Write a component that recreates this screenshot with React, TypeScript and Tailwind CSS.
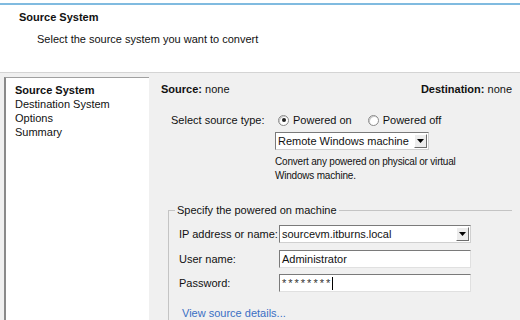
import React from "react";

function Radio({ checked }: { checked?: boolean }) {
  return (
    <span className="inline-flex w-[11px] h-[11px] rounded-full border border-[#8a8a8a] bg-white items-center justify-center shadow-[inset_1px_1px_0_#c8c8c8]">
      {checked ? <span className="w-[4px] h-[4px] rounded-full bg-[#222]" /> : null}
    </span>
  );
}

function DropBtn() {
  return (
    <span className="flex w-[13px] h-[14px] items-center justify-center bg-[#ececec] border border-t-white border-l-white border-b-[#6d6d6d] border-r-[#6d6d6d]">
      <svg width="7" height="4" viewBox="0 0 7 4"><path d="M0 0H7L3.5 4Z" fill="#000" /></svg>
    </span>
  );
}

export default function App() {
  return (
    <div
      className="w-[520px] h-[320px] overflow-hidden bg-[#f0f0f0] text-[11px] text-[#111] flex flex-col"
      style={{ fontFamily: "'Liberation Sans', Arial, sans-serif" }}
    >
      <div className="bg-white h-[73px] shrink-0 border-b border-[#d4d4d4] flex flex-col">
        <div className="h-[3px]" />
        <div className="h-[2px] bg-[#80bbe0]" />
        <div className="pl-[19px] pt-[5px] font-bold leading-[14px]">Source System</div>
        <div className="pl-[37px] pt-[8px] leading-[14px]">Select the source system you want to convert</div>
      </div>
      <div className="flex flex-1 pt-[4px] pl-[4px]">
        <div className="w-[145px] bg-white border-l-2 border-t border-l-[#8a8a8a] border-t-[#a0a0a0] pl-[9px] pt-[5px] leading-[14px]">
          <div className="font-bold">Source System</div>
          <div>Destination System</div>
          <div>Options</div>
          <div>Summary</div>
        </div>
        <div className="flex-1 flex flex-col pl-[12px] pr-[8px]">
          <div className="flex justify-between pt-[5px] leading-[14px]">
            <div><span className="font-bold">Source:</span> none</div>
            <div><span className="font-bold">Destination:</span> none</div>
          </div>
          <div className="flex pl-[10px] pt-[10px]">
            <div className="w-[104px] leading-[14px] pt-[7px]">Select source type:</div>
            <div className="flex flex-col">
              <div className="flex items-center gap-[4px] leading-[14px] pt-[7px] pl-[3px]">
                <Radio checked />
                <span className="mr-[12px]">Powered on</span>
                <Radio />
                <span>Powered off</span>
              </div>
              <div className="mt-[5px] w-[154px] h-[18px] bg-white border border-[#7a7a7a] border-b-[#d0d0d0] border-r-[#d0d0d0] flex items-center justify-between pl-[2px] pr-[1px]">
                <span>Remote Windows machine</span>
                <DropBtn />
              </div>
              <div className="mt-[5px] text-[10px] leading-[14px] tracking-[-0.2px]">
                <div>Convert any powered on physical or virtual</div>
                <div>Windows machine.</div>
              </div>
            </div>
          </div>
          <div className="mt-[27px] ml-[7px] border-l border-t border-[#c4c4c4] relative pl-[10px] pt-[14px] flex flex-col">
            <div className="absolute left-[6px] top-[-8px] bg-[#f0f0f0] px-[2px] leading-[14px]">Specify the powered on machine</div>
            <div className="flex items-center h-[18px]">
              <span className="w-[100px]">IP address or name:</span>
              <div className="w-[192px] h-[18px] bg-white border border-[#7a7a7a] border-b-[#d0d0d0] border-r-[#d0d0d0] flex items-center justify-between pl-[2px] pr-[1px]">
                <span>sourcevm.itburns.local</span>
                <DropBtn />
              </div>
            </div>
            <div className="flex items-center h-[18px] mt-[7px]">
              <span className="w-[100px]">User name:</span>
              <div className="w-[192px] h-[18px] bg-white border border-[#7a7a7a] border-b-[#e0e0e0] border-r-[#e0e0e0] flex items-center pl-[2px]">
                <span>Administrator</span>
              </div>
            </div>
            <div className="flex items-center h-[18px] mt-[6px]">
              <span className="w-[100px]">Password:</span>
              <div className="w-[192px] h-[18px] bg-white border border-[#7a7a7a] border-b-[#e0e0e0] border-r-[#e0e0e0] flex items-center pl-[2px]">
                <span className="tracking-[2px] text-[#333]">********</span>
                <span className="w-[1px] h-[13px] bg-black" />
              </div>
            </div>
            <div className="mt-[14px] text-[#3a6fc4] leading-[14px] pl-[3px]">View source details...</div>
          </div>
        </div>
      </div>
    </div>
  );
}
